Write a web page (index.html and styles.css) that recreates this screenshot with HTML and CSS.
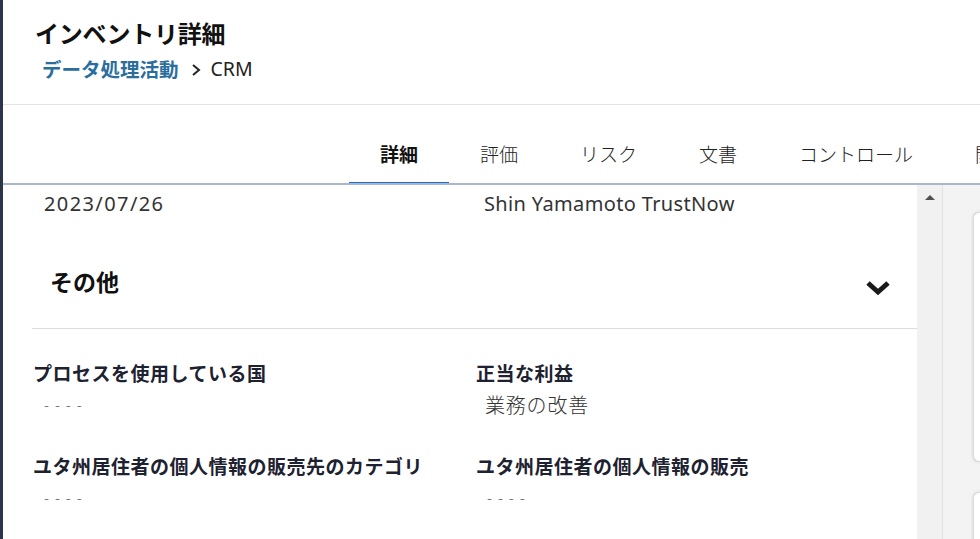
FILE: index.html
```html
<!DOCTYPE html>
<html lang="ja">
<head>
<meta charset="utf-8">
<title>インベントリ詳細</title>
<link rel="stylesheet" href="styles.css">
</head>
<body>
<div class="app">
  <div class="sidebar-edge"></div>
  <div class="main">
    <header class="page-header">
      <h1 class="title">インベントリ詳細</h1>
      <nav class="breadcrumb">
        <a class="crumb-link">データ処理活動</a>
        <svg class="crumb-sep" viewBox="0 0 10 14" width="10" height="14"><polyline points="2,2 8,7 2,12" fill="none" stroke="#222" stroke-width="2"/></svg>
        <span class="crumb-current">CRM</span>
      </nav>
    </header>
    <div class="tabs">
      <div class="tab active">詳細</div>
      <div class="tab">評価</div>
      <div class="tab">リスク</div>
      <div class="tab">文書</div>
      <div class="tab">コントロール</div>
      <div class="tab">関</div>
    </div>
    <div class="body-row">
      <div class="content">
        <div class="top-row">
          <div class="top-val date">2023/07/26</div>
          <div class="top-val latin">Shin Yamamoto TrustNow</div>
        </div>
        <div class="section-head">
          <h2 class="section-title">その他</h2>
          <svg class="chev" viewBox="0 0 26 16" width="26" height="16"><polyline points="3,3 13,12 23,3" fill="none" stroke="#1a1a1a" stroke-width="5" stroke-linejoin="miter"/></svg>
        </div>
        <div class="fields">
          <div class="field">
            <div class="label">プロセスを使用している国</div>
            <div class="value dash">- - - -</div>
          </div>
          <div class="field">
            <div class="label">正当な利益</div>
            <div class="value">業務の改善</div>
          </div>
          <div class="field">
            <div class="label">ユタ州居住者の個人情報の販売先のカテゴリ</div>
            <div class="value dash">- - - -</div>
          </div>
          <div class="field">
            <div class="label">ユタ州居住者の個人情報の販売</div>
            <div class="value dash">- - - -</div>
          </div>
        </div>
      </div>
      <div class="scrollbar"><div class="arrow-up"></div></div>
      <aside class="side">
        <div class="card card1"></div>
        <div class="card card2"></div>
      </aside>
    </div>
  </div>
</div>
</body>
</html>
```

FILE: styles.css
```css
html, body {
  margin: 0;
  padding: 0;
  background: #fff;
  font-family: "Noto Sans", "Noto Sans CJK JP", sans-serif;
  overflow: hidden;
}
.app {
  display: flex;
  width: 980px;
  height: 539px;
}
.sidebar-edge {
  width: 3px;
  background: #2d3548;
  flex: none;
}
.main {
  flex: 1;
  display: flex;
  flex-direction: column;
  min-width: 0;
}
.page-header {
  height: 104px;
  border-bottom: 1px solid #e3e3e3;
  padding-left: 32px;
  box-sizing: content-box;
}
.title {
  margin: 0;
  padding-top: 16px;
  font-family: "Noto Sans CJK JP", sans-serif;
  font-size: 24px;
  font-weight: 700;
  color: #111;
  line-height: 34px;
  letter-spacing: -0.2px;
}
.breadcrumb {
  display: flex;
  align-items: center;
  margin-top: 2px;
  padding-left: 7px;
  height: 32px;
}
.crumb-link {
  font-family: "Noto Sans CJK JP", sans-serif;
  font-size: 19.5px;
  font-weight: 700;
  color: #2a6e9e;
  letter-spacing: 0;
}
.crumb-sep {
  margin: 4px 10px 0 12px;
}
.crumb-current {
  font-size: 19.5px;
  color: #222;
}
.tabs {
  height: 78px;
  border-bottom: 2px solid #aab6cb;
  display: flex;
  align-items: flex-end;
  padding-left: 346px;
  white-space: nowrap;
  overflow: hidden;
}
.tab {
  font-family: "Noto Sans CJK JP", sans-serif;
  font-size: 19px;
  font-weight: 300;
  color: #222;
  padding: 0 31px 11px;
  height: 34px;
  line-height: 34px;
  margin-bottom: -2px;
  border-bottom: 3px solid transparent;
}
.tab.active {
  font-weight: 700;
  color: #111;
  border-bottom-color: #1b6cd8;
}
.body-row {
  flex: 1;
  display: flex;
  min-height: 0;
}
.content {
  width: 914px;
  flex: none;
  padding-left: 29px;
  box-sizing: border-box;
}
.top-row {
  display: grid;
  grid-template-columns: 443px 1fr;
  height: 38px;
  align-items: center;
}
.top-val {
  font-size: 20px;
  color: #333;
  margin-top: -2px;
}
.top-val.date {
  padding-left: 12px;
  letter-spacing: 1.4px;
}
.top-val.latin {
  padding-left: 9px;
  letter-spacing: 0.35px;
}
.section-head {
  height: 106px;
  border-bottom: 1px solid #dddddd;
  display: flex;
  align-items: flex-start;
  justify-content: space-between;
  padding: 42px 26px 0 18px;
  box-sizing: border-box;
}
.section-title {
  margin: 0;
  font-family: "Noto Sans CJK JP", sans-serif;
  font-size: 23px;
  font-weight: 700;
  line-height: 33px;
  color: #111;
}
.chev {
  margin-top: 15px;
}
.fields {
  display: grid;
  grid-template-columns: 443px 1fr;
  padding-top: 30px;
}
.field {
  height: 93px;
  padding-left: 1px;
}
.label {
  font-family: "Noto Sans CJK JP", sans-serif;
  font-size: 19px;
  font-weight: 700;
  color: #1e2230;
  line-height: 28px;
  letter-spacing: 0.5px;
}
.value {
  font-family: "Noto Sans CJK JP", sans-serif;
  font-size: 20px;
  font-weight: 300;
  color: #333;
  line-height: 30px;
  margin-top: 3px;
  padding-left: 9px;
  letter-spacing: 0.8px;
}
.value.dash {
  font-size: 15px;
  color: #555;
  padding-left: 11px;
  letter-spacing: 1.3px;
}
.scrollbar {
  width: 25px;
  flex: none;
  background: #f1f1f1;
  border-right: 1px solid #e2e2e2;
}
.arrow-up {
  width: 0;
  height: 0;
  border-left: 5px solid transparent;
  border-right: 5px solid transparent;
  border-bottom: 5px solid #505050;
  margin: 10px auto 0;
}
.side {
  flex: 1;
  background: #f3f3f3;
  padding-top: 27px;
  padding-left: 30px;
  overflow: hidden;
}
.card {
  background: #fff;
  border-radius: 6px 0 0 6px;
  box-shadow: 0 0 3px rgba(0,0,0,0.18);
  border: 1px solid #dcdcdc;
  border-right: none;
}
.card1 { height: 248px; }
.card2 { height: 80px; margin-top: 30px; }
```
